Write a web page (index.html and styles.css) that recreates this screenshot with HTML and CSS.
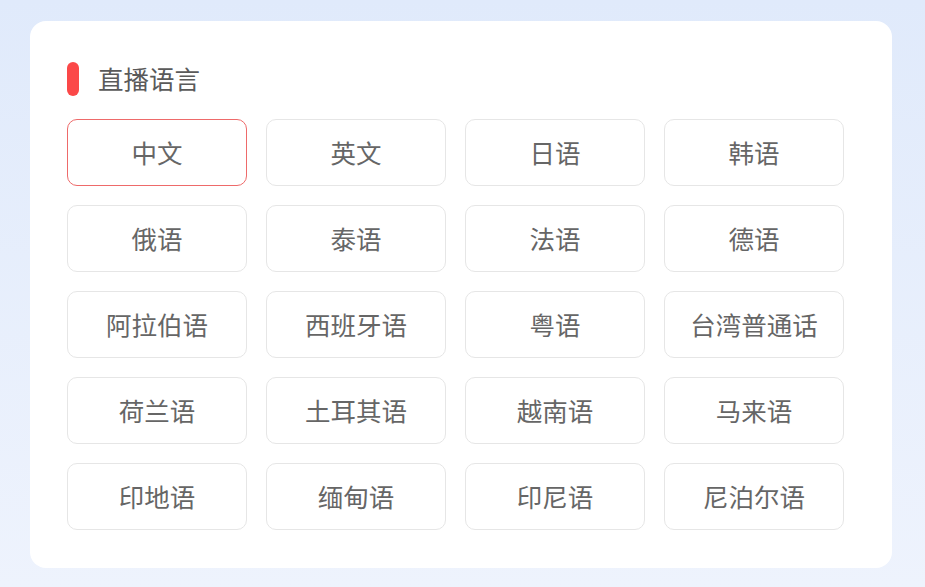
FILE: index.html
```html
<!DOCTYPE html>
<html lang="zh">
<head>
<meta charset="utf-8">
<link rel="stylesheet" href="styles.css">
</head>
<body>
<div class="page">
  <section class="card">
    <h2 class="title"><span class="bar"></span><span class="label">直播语言</span></h2>
    <div class="grid">
      <div class="opt active">中文</div>
      <div class="opt">英文</div>
      <div class="opt">日语</div>
      <div class="opt">韩语</div>
      <div class="opt">俄语</div>
      <div class="opt">泰语</div>
      <div class="opt">法语</div>
      <div class="opt">德语</div>
      <div class="opt">阿拉伯语</div>
      <div class="opt">西班牙语</div>
      <div class="opt">粤语</div>
      <div class="opt">台湾普通话</div>
      <div class="opt">荷兰语</div>
      <div class="opt">土耳其语</div>
      <div class="opt">越南语</div>
      <div class="opt">马来语</div>
      <div class="opt">印地语</div>
      <div class="opt">缅甸语</div>
      <div class="opt">印尼语</div>
      <div class="opt">尼泊尔语</div>
    </div>
  </section>
</div>
</body>
</html>
```
FILE: styles.css
```css
html, body {
  margin: 0;
  padding: 0;
  height: 100%;
}
body {
  background: linear-gradient(180deg, #e0eafb 0%, #eef3fd 100%);
  font-family: "Noto Sans CJK SC", "Noto Sans", sans-serif;
}
.page {
  padding: 21px 33px 0 30px;
}
.card {
  width: 862px;
  height: 547px;
  box-sizing: border-box;
  background: #fff;
  border-radius: 16px;
  padding: 41px 0 0 37px;
}
.title {
  display: flex;
  align-items: center;
  margin: 0;
  height: 34px;
  font-size: 25.5px;
  font-weight: 400;
  color: #5a5a5a;
  gap: 19px;
}
.label {
  padding-bottom: 3px;
}
.bar {
  width: 12px;
  height: 34px;
  border-radius: 6px;
  background: #fb4848;
}
.grid {
  margin-top: 23px;
  display: grid;
  grid-template-columns: repeat(4, 180px);
  grid-auto-rows: 67px;
  column-gap: 19px;
  row-gap: 19px;
}
.opt {
  box-sizing: border-box;
  border: 1px solid #e6e6e6;
  border-radius: 10px;
  display: flex;
  align-items: center;
  justify-content: center;
  padding-bottom: 3px;
  font-size: 25.5px;
  color: #666;
}
.opt.active {
  border-color: #ee6a6a;
}
```
